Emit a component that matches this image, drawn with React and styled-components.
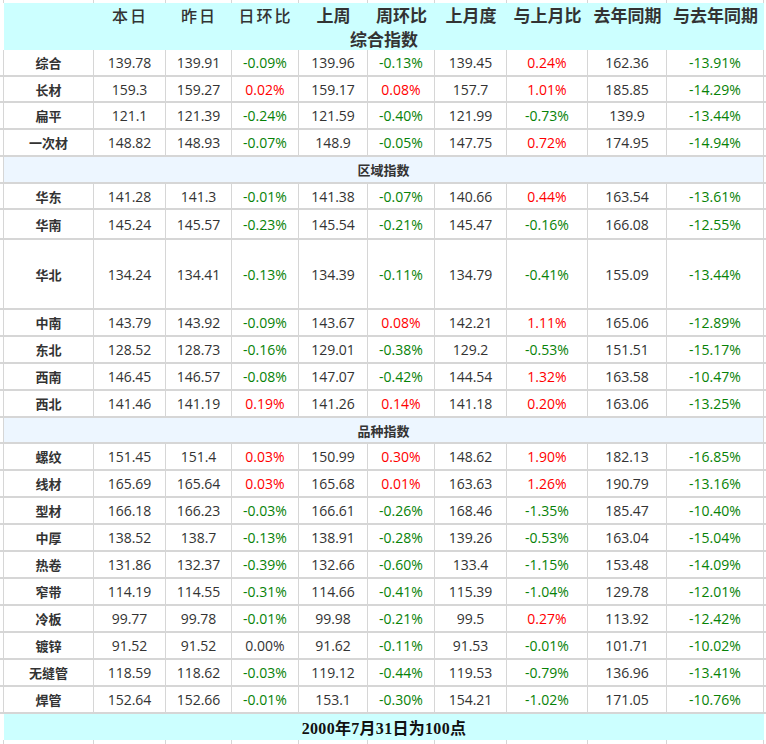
import React from "react";
import styled, { createGlobalStyle } from "styled-components";

const GlobalStyle = createGlobalStyle`
  html, body { margin: 0; padding: 0; background: #ffffff; }
  #root { width: 766px; }
`;

const LINE = "#d6d6d6";
const CYAN = "#ccffff";
const BAND = "#edf6ff";
const GREEN = "#078207";
const RED = "#ff0000";
const INK = "#333333";

const Sheet = styled.table`
  border-collapse: separate;
  border-spacing: 0;
  table-layout: fixed;
  width: 766px;
  font-family: "Open Sans", "Noto Sans CJK SC", sans-serif;
  color: ${INK};
`;

const Col = styled.col`
  width: ${(p) => p.$w}px;
`;

const Row = styled.tr`
  height: ${(p) => p.$h}px;
`;

const Fill = styled.td`
  padding: 0;
  background: #ffffff;
  border-right: ${(p) => (p.$line ? `1px solid ${LINE}` : "none")};
  border-bottom: ${(p) => (p.$bottom ? `2px solid ${LINE}` : "none")};
`;

const GridCell = styled.td`
  padding: 0;
  border-right: 1px solid ${LINE};
`;

const HeadCell = styled.th`
  padding: 0;
  background: ${CYAN};
  font-family: "Noto Sans CJK SC", sans-serif;
  font-size: ${(p) => (p.$light ? 16 : 17)}px;
  font-weight: ${(p) => (p.$light ? 500 : 700)};
  letter-spacing: ${(p) => (p.$light ? "2px" : "0")};
  color: #333333;
  text-align: center;
  vertical-align: middle;
  white-space: nowrap;
  line-height: 20px;
`;

const TitleCell = styled.th`
  padding: 0;
  background: ${CYAN};
  font-family: "Noto Sans CJK SC", sans-serif;
  font-size: 17px;
  font-weight: 700;
  color: #333333;
  text-align: center;
  vertical-align: middle;
  line-height: 20px;
`;

const BandCell = styled.td`
  padding: 0;
  background: ${BAND};
  border-right: 1px solid ${LINE};
  border-bottom: 2px solid ${LINE};
  font-family: "Noto Sans CJK SC", sans-serif;
  font-size: 13px;
  font-weight: 700;
  color: #333333;
  text-align: center;
  vertical-align: middle;
`;

const LabelCell = styled.td`
  padding: 0;
  border-right: 1px solid ${LINE};
  border-bottom: 2px solid ${LINE};
  font-family: "Noto Sans CJK SC", sans-serif;
  font-size: 13px;
  font-weight: 700;
  color: #333333;
  text-align: center;
  vertical-align: middle;
`;

const NumCell = styled.td`
  padding: 0;
  border-right: 1px solid ${LINE};
  border-bottom: 2px solid ${LINE};
  font-size: 14px;
  color: ${(p) => p.$color || INK};
  text-align: center;
  vertical-align: middle;
  white-space: nowrap;
`;

const FootCell = styled.td`
  padding: 0;
  background: ${CYAN};
  font-family: "Liberation Serif", "Noto Sans CJK SC", serif;
  font-size: 16px;
  font-weight: 700;
  color: #111111;
  text-align: center;
  vertical-align: middle;
  letter-spacing: 0.3px;
`;

const COLS = [4, 90, 72, 66, 67, 69, 67, 72, 81, 79, 97, 2];

const HEADERS = [
  ["本日", true],
  ["昨日", true],
  ["日环比", true],
  ["上周", false],
  ["周环比", false],
  ["上月度", false],
  ["与上月比", false],
  ["去年同期", false],
  ["与去年同期", false],
];

const SECTIONS = [
  {
    title: null,
    rows: [
      [27, "综合", "139.78", "139.91", "-0.09%", "139.96", "-0.13%", "139.45", "0.24%", "162.36", "-13.91%"],
      [26, "长材", "159.3", "159.27", "0.02%", "159.17", "0.08%", "157.7", "1.01%", "185.85", "-14.29%"],
      [27, "扁平", "121.1", "121.39", "-0.24%", "121.59", "-0.40%", "121.99", "-0.73%", "139.9", "-13.44%"],
      [27, "一次材", "148.82", "148.93", "-0.07%", "148.9", "-0.05%", "147.75", "0.72%", "174.95", "-14.94%"],
    ],
  },
  {
    title: "区域指数",
    band: 27,
    rows: [
      [26, "华东", "141.28", "141.3", "-0.01%", "141.38", "-0.07%", "140.66", "0.44%", "163.54", "-13.61%"],
      [30, "华南", "145.24", "145.57", "-0.23%", "145.54", "-0.21%", "145.47", "-0.16%", "166.08", "-12.55%"],
      [70, "华北", "134.24", "134.41", "-0.13%", "134.39", "-0.11%", "134.79", "-0.41%", "155.09", "-13.44%"],
      [27, "中南", "143.79", "143.92", "-0.09%", "143.67", "0.08%", "142.21", "1.11%", "165.06", "-12.89%"],
      [27, "东北", "128.52", "128.73", "-0.16%", "129.01", "-0.38%", "129.2", "-0.53%", "151.51", "-15.17%"],
      [27, "西南", "146.45", "146.57", "-0.08%", "147.07", "-0.42%", "144.54", "1.32%", "163.58", "-10.47%"],
      [27, "西北", "141.46", "141.19", "0.19%", "141.26", "0.14%", "141.18", "0.20%", "163.06", "-13.25%"],
    ],
  },
  {
    title: "品种指数",
    band: 26,
    rows: [
      [27, "螺纹", "151.45", "151.4", "0.03%", "150.99", "0.30%", "148.62", "1.90%", "182.13", "-16.85%"],
      [27, "线材", "165.69", "165.64", "0.03%", "165.68", "0.01%", "163.63", "1.26%", "190.79", "-13.16%"],
      [27, "型材", "166.18", "166.23", "-0.03%", "166.61", "-0.26%", "168.46", "-1.35%", "185.47", "-10.40%"],
      [27, "中厚", "138.52", "138.7", "-0.13%", "138.91", "-0.28%", "139.26", "-0.53%", "163.04", "-15.04%"],
      [27, "热卷", "131.86", "132.37", "-0.39%", "132.66", "-0.60%", "133.4", "-1.15%", "153.48", "-14.09%"],
      [27, "窄带", "114.19", "114.55", "-0.31%", "114.66", "-0.41%", "115.39", "-1.04%", "129.78", "-12.01%"],
      [27, "冷板", "99.77", "99.78", "-0.01%", "99.98", "-0.21%", "99.5", "0.27%", "113.92", "-12.42%"],
      [27, "镀锌", "91.52", "91.52", "0.00%", "91.62", "-0.11%", "91.53", "-0.01%", "101.71", "-10.02%"],
      [27, "无缝管", "118.59", "118.62", "-0.03%", "119.12", "-0.44%", "119.53", "-0.79%", "136.96", "-13.41%"],
      [27, "焊管", "152.64", "152.66", "-0.01%", "153.1", "-0.30%", "154.21", "-1.02%", "171.05", "-10.76%"],
    ],
  },
];

function toneOf(text) {
  if (!text.endsWith("%")) return undefined;
  const v = parseFloat(text);
  if (v < 0) return GREEN;
  if (v > 0) return RED;
  return INK;
}

function GridRow({ h }) {
  return (
    <Row $h={h}>
      <Fill $line />
      {COLS.slice(1, 11).map((_, i) => (
        <GridCell key={i} />
      ))}
      <Fill />
    </Row>
  );
}

function DataRow({ row }) {
  const [h, label, ...vals] = row;
  return (
    <Row $h={h}>
      <Fill $line $bottom />
      <LabelCell>{label}</LabelCell>
      {vals.map((v, i) => (
        <NumCell key={i} $color={toneOf(v)}>
          {v}
        </NumCell>
      ))}
      <Fill $bottom />
    </Row>
  );
}

export default function App() {
  return (
    <>
      <GlobalStyle />
      <Sheet>
        <colgroup>
          {COLS.map((w, i) => (
            <Col key={i} $w={w} />
          ))}
        </colgroup>
        <thead>
          <GridRow h={3} />
          <Row $h={24}>
            <Fill />
            <HeadCell />
            {HEADERS.map(([t, light]) => (
              <HeadCell key={t} $light={light}>
                {t}
              </HeadCell>
            ))}
            <Fill />
          </Row>
          <Row $h={23}>
            <Fill />
            <TitleCell colSpan={10}>综合指数</TitleCell>
            <Fill />
          </Row>
        </thead>
        <tbody>
          {SECTIONS.map((sec, si) => (
            <React.Fragment key={si}>
              {sec.title && (
                <Row $h={sec.band}>
                  <Fill $line $bottom />
                  <BandCell colSpan={10}>{sec.title}</BandCell>
                  <Fill $bottom />
                </Row>
              )}
              {sec.rows.map((r) => (
                <DataRow key={r[1]} row={r} />
              ))}
            </React.Fragment>
          ))}
          <Row $h={26}>
            <Fill />
            <FootCell colSpan={10}>2000年7月31日为100点</FootCell>
            <Fill />
          </Row>
          <GridRow h={4} />
        </tbody>
      </Sheet>
    </>
  );
}
